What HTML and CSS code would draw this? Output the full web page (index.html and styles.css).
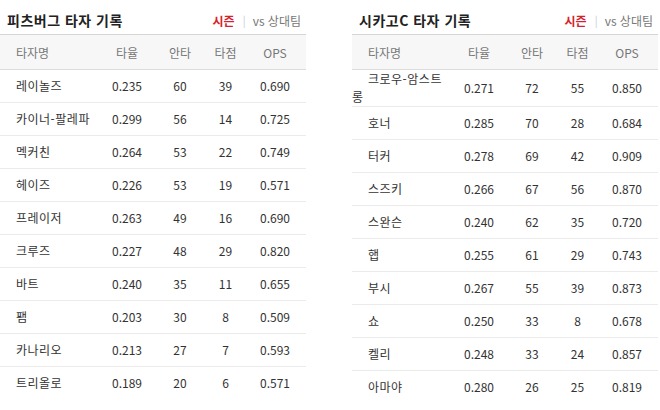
FILE: index.html
```html
<!DOCTYPE html>
<html lang="ko">
<head>
<meta charset="utf-8">
<link rel="stylesheet" href="styles.css">
</head>
<body>
<div class="wrap">
  <section class="panel">
    <div class="title-row">
      <h2 class="title">피츠버그 타자 기록</h2>
      <div class="tabs"><span class="tab on">시즌</span><span class="sep">|</span><span class="tab">vs 상대팀</span></div>
    </div>
    <table class="stats">
      <colgroup><col class="c-name"><col class="c-avg"><col class="c-h"><col class="c-rbi"><col class="c-ops"></colgroup>
      <thead><tr><th class="name">타자명</th><th>타율</th><th>안타</th><th>타점</th><th>OPS</th></tr></thead>
      <tbody>
        <tr><td class="name">레이놀즈</td><td>0.235</td><td>60</td><td>39</td><td>0.690</td></tr>
        <tr><td class="name">카이너-팔레파</td><td>0.299</td><td>56</td><td>14</td><td>0.725</td></tr>
        <tr><td class="name">멕커친</td><td>0.264</td><td>53</td><td>22</td><td>0.749</td></tr>
        <tr><td class="name">헤이즈</td><td>0.226</td><td>53</td><td>19</td><td>0.571</td></tr>
        <tr><td class="name">프레이저</td><td>0.263</td><td>49</td><td>16</td><td>0.690</td></tr>
        <tr><td class="name">크루즈</td><td>0.227</td><td>48</td><td>29</td><td>0.820</td></tr>
        <tr><td class="name">바트</td><td>0.240</td><td>35</td><td>11</td><td>0.655</td></tr>
        <tr><td class="name">팸</td><td>0.203</td><td>30</td><td>8</td><td>0.509</td></tr>
        <tr><td class="name">카나리오</td><td>0.213</td><td>27</td><td>7</td><td>0.593</td></tr>
        <tr><td class="name">트리올로</td><td>0.189</td><td>20</td><td>6</td><td>0.571</td></tr>
      </tbody>
    </table>
  </section>
  <section class="panel">
    <div class="title-row">
      <h2 class="title">시카고C 타자 기록</h2>
      <div class="tabs"><span class="tab on">시즌</span><span class="sep">|</span><span class="tab">vs 상대팀</span></div>
    </div>
    <table class="stats">
      <colgroup><col class="c-name"><col class="c-avg"><col class="c-h"><col class="c-rbi"><col class="c-ops"></colgroup>
      <thead><tr><th class="name">타자명</th><th>타율</th><th>안타</th><th>타점</th><th>OPS</th></tr></thead>
      <tbody>
        <tr><td class="name">크로우-암스트롱</td><td>0.271</td><td>72</td><td>55</td><td>0.850</td></tr>
        <tr><td class="name">호너</td><td>0.285</td><td>70</td><td>28</td><td>0.684</td></tr>
        <tr><td class="name">터커</td><td>0.278</td><td>69</td><td>42</td><td>0.909</td></tr>
        <tr><td class="name">스즈키</td><td>0.266</td><td>67</td><td>56</td><td>0.870</td></tr>
        <tr><td class="name">스완슨</td><td>0.240</td><td>62</td><td>35</td><td>0.720</td></tr>
        <tr><td class="name">햅</td><td>0.255</td><td>61</td><td>29</td><td>0.743</td></tr>
        <tr><td class="name">부시</td><td>0.267</td><td>55</td><td>39</td><td>0.873</td></tr>
        <tr><td class="name">쇼</td><td>0.250</td><td>33</td><td>8</td><td>0.678</td></tr>
        <tr><td class="name">켈리</td><td>0.248</td><td>33</td><td>24</td><td>0.857</td></tr>
        <tr><td class="name">아마야</td><td>0.280</td><td>26</td><td>25</td><td>0.819</td></tr>
      </tbody>
    </table>
  </section>
</div>
</body>
</html>
```
FILE: styles.css
```css
* { box-sizing: border-box; }
html, body { margin: 0; padding: 0; background: #fff; }
body {
  font-family: "Noto Sans CJK KR", "Noto Sans", sans-serif;
  color: #333;
  font-size: 12px;
}
.wrap {
  display: flex;
  gap: 46px;
  align-items: flex-start;
}
.panel { width: 306px; flex: none; }
.title-row {
  height: 34px;
  display: flex;
  align-items: center;
  justify-content: space-between;
  padding: 6px 5px 0 7px;
}
.title {
  margin: 0;
  font-size: 14px;
  font-weight: 700;
  color: #222;
  letter-spacing: 0.5px;
}
.tabs {
  display: flex;
  align-items: center;
  font-size: 12px;
  color: #777;
}
.tab.on { color: #d4232c; font-weight: 700; }
.sep { color: #ccc; margin: 0 7px 0 8px; font-size: 11px; }
.stats {
  width: 306px;
  border-collapse: collapse;
  table-layout: fixed;
}
.c-name { width: 101px; }
.c-avg { width: 52px; }
.c-h { width: 54px; }
.c-rbi { width: 37px; }
.c-ops { width: 62px; }
.stats th {
  height: 35px;
  background: #f7f7f7;
  border-top: 1px solid #d6d6d6;
  border-bottom: 1px solid #dcdcdc;
  font-weight: 400;
  font-size: 12px;
  color: #777;
  text-align: center;
  padding: 0;
}
.stats td {
  height: 33px;
  padding: 0;
  text-align: center;
  line-height: 18px;
  border-bottom: 1px solid #ebebeb;
  color: #333;
}
.stats tbody tr:last-child td { border-bottom: none; }
.stats .name {
  text-align: left;
  text-indent: 16px;
}
.stats td.name {
  letter-spacing: 0.5px;
  padding-right: 4px;
}
```
